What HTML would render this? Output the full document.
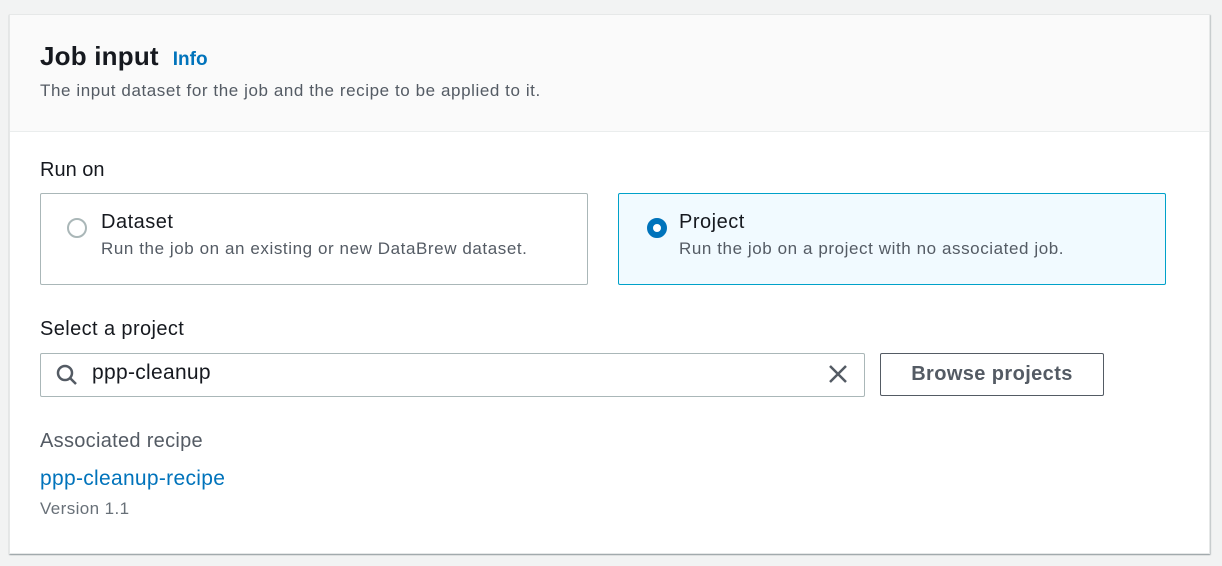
<!DOCTYPE html>
<html><head><style>
*{box-sizing:border-box;margin:0;padding:0}
body{width:1222px;height:566px;background:#f2f3f3;font-family:"Liberation Sans",sans-serif;position:relative;overflow:hidden}
.card{position:absolute;left:9px;top:14px;width:1201px;height:540px;background:#fff;border:1px solid #e6e8e8;box-shadow:0 1px 1px rgba(0,28,36,.3),1px 1px 1px rgba(0,28,36,.15)}
.hdr{height:117px;background:#fafafa;border-bottom:1px solid #eaeded}
.abs{position:absolute;white-space:nowrap}
h2{font-size:26px;font-weight:bold;color:#16191f;letter-spacing:0.2px}
.tile{position:absolute;top:178px;height:92px;border:1px solid #aab7b8;border-radius:2px}
.desc{font-size:17px;letter-spacing:0.58px;color:#545b64}
</style></head><body>
<div class="card"><div class="hdr"></div>
<div class="abs" style="left:30px;top:26px"><h2 style="display:inline">Job input</h2><span style="color:#0073bb;font-weight:bold;font-size:19px;margin-left:14px">Info</span></div>
<div class="abs desc" style="left:30px;top:66px">The input dataset for the job and the recipe to be applied to it.</div>
<div class="abs" style="left:30px;top:144px;font-size:20px;color:#16191f">Run on</div>
<div class="tile" style="left:30px;width:548px"></div>
<div class="tile" style="left:608px;width:548px;background:#f1faff;border-color:#00a1c9"></div>
<div class="abs" style="left:57px;top:203px;width:20px;height:20px;border:2px solid #aab7b8;border-radius:50%"></div>
<div class="abs" style="left:91px;top:196px;font-size:20px;letter-spacing:0.5px;color:#16191f">Dataset</div>
<div class="abs desc" style="left:91px;top:224px">Run the job on an existing or new DataBrew dataset.</div>
<div class="abs" style="left:637px;top:203px;width:20px;height:20px;border:6px solid #0073bb;border-radius:50%;background:#fff"></div>
<div class="abs" style="left:669px;top:196px;font-size:20px;letter-spacing:0.5px;color:#16191f">Project</div>
<div class="abs desc" style="left:669px;top:224px">Run the job on a project with no associated job.</div>
<div class="abs" style="left:30px;top:303px;font-size:20px;letter-spacing:0.4px;color:#16191f">Select a project</div>
<div class="abs" style="left:30px;top:338px;width:825px;height:44px;border:1px solid #aab7b8;border-radius:2px"></div>
<svg class="abs" style="left:46px;top:349px" width="22" height="22" viewBox="0 0 22 22"><circle cx="9" cy="9" r="7" fill="none" stroke="#545b64" stroke-width="2.5"/><line x1="14" y1="14" x2="20" y2="20" stroke="#545b64" stroke-width="2.5"/></svg>
<div class="abs" style="left:82px;top:346px;font-size:21px;letter-spacing:0.3px;color:#16191f">ppp-cleanup</div>
<svg class="abs" style="left:818px;top:349px" width="20" height="20" viewBox="0 0 20 20"><path d="M2 2L18 18M18 2L2 18" stroke="#545b64" stroke-width="2.5"/></svg>
<div class="abs" style="left:870px;top:338px;width:224px;height:43px;border:1px solid #545b64;border-radius:2px;font-size:20px;letter-spacing:0.4px;font-weight:bold;color:#545b64;text-align:center;line-height:41px">Browse projects</div>
<div class="abs" style="left:30px;top:415px;font-size:20px;letter-spacing:0.3px;color:#545b64">Associated recipe</div>
<div class="abs" style="left:30px;top:452px;font-size:21px;letter-spacing:0.3px;color:#0073bb">ppp-cleanup-recipe</div>
<div class="abs" style="left:30px;top:484px;font-size:17px;letter-spacing:0.4px;color:#687078">Version 1.1</div>
</div>
</body></html>
